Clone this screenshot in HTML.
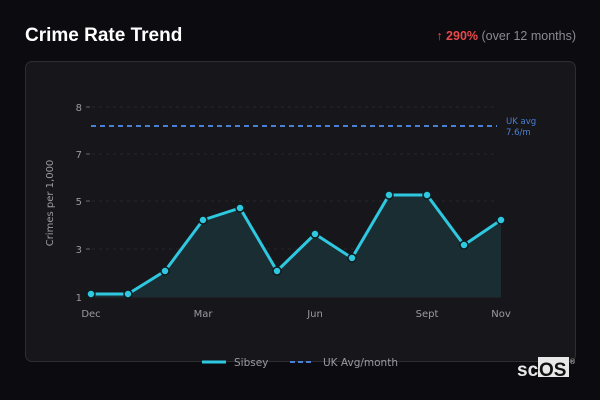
<!DOCTYPE html>
<html><head><meta charset="utf-8"><style>
html,body{margin:0;padding:0;background:#0c0b10;width:600px;height:400px;overflow:hidden;font-family:"DejaVu Sans","Liberation Sans",sans-serif}
.t{position:absolute;left:25px;top:25px;color:#fff;font-weight:bold;font-size:19px;font-family:"Liberation Sans",sans-serif}
.r{position:absolute;right:24px;top:29px;font-size:12.5px;color:#8a8a90;font-family:"Liberation Sans",sans-serif}
.r b{color:#e84a4a}
.card{position:absolute;left:25px;top:61px;width:549px;height:299px;background:#17171b;border:1px solid #2d2d32;border-radius:7px}
svg{position:absolute;left:0;top:0}
</style></head><body>
<div class="t">Crime Rate Trend</div>
<div class="r"><b>↑ 290%</b> (over 12 months)</div>
<div class="card"></div>
<svg width="600" height="400" font-family="DejaVu Sans, Liberation Sans, sans-serif">
<g stroke="#26262b" stroke-dasharray="3,4" stroke-width="1">
<line x1="92" y1="107" x2="497" y2="107"/><line x1="92" y1="154" x2="497" y2="154"/>
<line x1="92" y1="201" x2="497" y2="201"/><line x1="92" y1="249" x2="497" y2="249"/>
</g>
<line x1="91" y1="297" x2="501" y2="297" stroke="#2a2a30"/>
<g fill="#9a9aa0" font-size="10" text-anchor="end">
<text x="82" y="111">8</text><text x="82" y="158">7</text><text x="82" y="205">5</text><text x="82" y="253">3</text><text x="82" y="301">1</text>
</g>
<g stroke="#666" stroke-width="1"><line x1="86" y1="107" x2="90" y2="107"/><line x1="86" y1="154" x2="90" y2="154"/><line x1="86" y1="201" x2="90" y2="201"/><line x1="86" y1="249" x2="90" y2="249"/></g>
<text transform="translate(53,203) rotate(-90)" fill="#9a9aa0" font-size="10" text-anchor="middle">Crimes per 1,000</text>
<g fill="#9a9aa0" font-size="10" text-anchor="middle">
<text x="91" y="317">Dec</text><text x="203" y="317">Mar</text><text x="315" y="317">Jun</text><text x="427" y="317">Sept</text><text x="501" y="317">Nov</text>
</g>
<line x1="91" y1="126" x2="497" y2="126" stroke="#4a7fd4" stroke-width="2" stroke-dasharray="5,4"/>
<text x="506" y="124" fill="#4a7fd4" font-size="8.5">UK avg</text>
<text x="506" y="135" fill="#4a7fd4" font-size="8.5">7.6/m</text>
<polygon fill="#1a2d33" points="91,297 91,294 128,294 165,271 203,220 240,208 277,271 315,234 352,258 389,195 427,195 464,245 501,220 501,297"/>
<polyline fill="none" stroke="#2ec8e0" stroke-width="3" stroke-linejoin="round" points="91,294 128,294 165,271 203,220 240,208 277,271 315,234 352,258 389,195 427,195 464,245 501,220"/>
<g fill="#2ec8e0" stroke="#0f1a1e" stroke-width="1.5">
<circle cx="91" cy="294" r="4"/><circle cx="128" cy="294" r="4"/><circle cx="165" cy="271" r="4"/><circle cx="203" cy="220" r="4"/><circle cx="240" cy="208" r="4"/><circle cx="277" cy="271" r="4"/><circle cx="315" cy="234" r="4"/><circle cx="352" cy="258" r="4"/><circle cx="389" cy="195" r="4"/><circle cx="427" cy="195" r="4"/><circle cx="464" cy="245" r="4"/><circle cx="501" cy="220" r="4"/>
</g>
<line x1="202" y1="362" x2="226" y2="362" stroke="#2ec8e0" stroke-width="3"/>
<text x="234" y="366" fill="#9a9aa0" font-size="10.5">Sibsey</text>
<line x1="290" y1="362" x2="314" y2="362" stroke="#4a7fd4" stroke-width="2" stroke-dasharray="5,3"/>
<text x="323" y="366" fill="#9a9aa0" font-size="10.5">UK Avg/month</text>
<rect x="538" y="357" width="31" height="20" fill="#e8e8e8"/>
<text x="517" y="376" fill="#e8e8e8" font-size="19" font-family="Liberation Sans, sans-serif" font-weight="bold">sc</text>
<text x="539" y="376" fill="#111" font-size="19" font-family="Liberation Sans, sans-serif" font-weight="bold">OS</text>
<text x="569" y="364" fill="#ccc" font-size="7">®</text>
</svg>
</body></html>
